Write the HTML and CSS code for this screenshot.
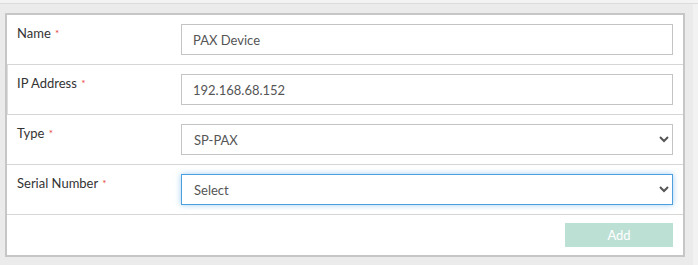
FILE: index.html
```html
<!DOCTYPE html>
<html lang="en">
<head>
    <meta charset="UTF-8">
    <meta name="viewport" content="width=device-width, initial-scale=1.0">
    <title>Add Device</title>
    <link rel="stylesheet" href="styles.css">
</head>
<body>
    <div class="top-band"></div>
    <div class="page">
        <div class="main">
            <form class="card" onsubmit="return false">
                <!-- name -->
                <div class="form-row">
                    <label for="name">Name <span class="req">*</span></label>
                    <input type="text" id="name" class="form-control" value="PAX Device">
                </div>

                <!-- ip -->
                <div class="form-row form-row-edge">
                    <label for="ip">IP Address <span class="req">*</span></label>
                    <input type="text" id="ip" class="form-control" value="192.168.68.152">
                </div>

                <!-- type -->
                <div class="form-row">
                    <label for="type">Type <span class="req">*</span></label>
                    <select id="type" class="form-control">
                        <option>SP-PAX</option>
                    </select>
                </div>

                <!-- serial -->
                <div class="form-row">
                    <label for="serial">Serial Number <span class="req">*</span></label>
                    <select id="serial" class="form-control focused">
                        <option>Select</option>
                    </select>
                </div>

                <div class="form-footer">
                    <button class="btn-add" disabled>Add</button>
                </div>
            </form>
        </div>
        <div class="scroll-strip"></div>
    </div>
</body>
</html>
```

FILE: styles.css
```css
* {
    box-sizing: border-box;
}
body {
    margin: 0;
    background-color: #ebebeb;
    font-family: Lato, 'Liberation Sans', sans-serif;
    font-size: 13px;
    color: #333;
}
.top-band {
    height: 4px;
    background-color: #f3f3f3;
    border-bottom: 1px solid #dcdcdc;
}
.page {
    display: flex;
    height: 261px;
}
.main {
    flex: 1;
    padding: 9px 8px 0 5px;
}
.scroll-strip {
    width: 5px;
    background-color: #f2f2f2;
}
.card {
    background-color: #fff;
    border: 2px solid #c6c6c6;
}
.form-row {
    display: grid;
    grid-template-columns: 164px 1fr;
    padding: 9px 10px 9px 10px;
    border-bottom: 1px solid #d6d6d6;
}
.form-row-edge {
    border-left: 1px solid #dedede;
    padding-left: 9px;
}
.form-row label {
    padding-top: 1px;
    line-height: 16px;
    color: #333;
}
.req {
    color: #e8403a;
    font-size: 10px;
    vertical-align: top;
    margin-left: 1px;
}
.form-control {
    width: 100%;
    height: 31px;
    padding: 0 11px;
    border: 1px solid #c4c4c4;
    border-radius: 0;
    background-color: #fff;
    font-family: Lato, 'Liberation Sans', sans-serif;
    font-size: 13px;
    color: #555;
    outline: none;
}
select.form-control {
    padding-left: 8px;
}
.form-control.focused {
    border-color: #4a9fdc;
    box-shadow: 0 0 6px rgba(102, 175, 233, 0.6);
}
.form-footer {
    display: flex;
    justify-content: flex-end;
    padding: 8px 10px 8px 10px;
}
.btn-add {
    width: 108px;
    height: 24px;
    border: none;
    background-color: #bde0d4;
    color: #fff;
    font-family: Lato, 'Liberation Sans', sans-serif;
    font-size: 13px;
}
```
